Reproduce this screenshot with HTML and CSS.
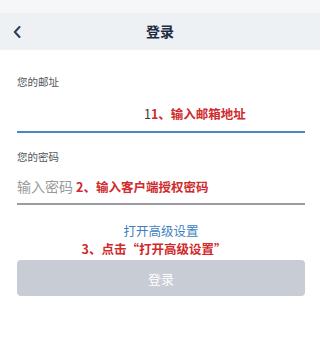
FILE: index.html
```html
<!DOCTYPE html>
<html lang="zh">
<head>
<meta charset="utf-8">
<link rel="stylesheet" href="styles.css">
</head>
<body>
<div class="top">
  <div class="status"></div>
  <div class="nav">
    <svg class="back" width="8" height="12" viewBox="0 0 8 12"><polyline points="6.5,1 1.8,6 6.5,11" fill="none" stroke="#2b3d5c" stroke-width="2" stroke-linecap="round" stroke-linejoin="round"/></svg>
    <div class="title">登录</div>
  </div>
</div>
<div class="form">
  <div class="label l1">您的邮址</div>
  <div class="field f1"><span class="note"><span class="dim">1</span>1、输入邮箱地址</span></div>
  <div class="label l2">您的密码</div>
  <div class="field f2"><span class="ph">输入密码</span><span class="note n2">2、输入客户端授权密码</span></div>
  <div class="link">打开高级设置</div>
  <div class="note n3">3、点击“打开高级设置”</div>
  <div class="btn">登录</div>
</div>
</body>
</html>
```
FILE: styles.css
```css
* { box-sizing: border-box; }
html, body { margin: 0; padding: 0; background: #fff; }
body {
  width: 320px;
  height: 359px;
  overflow: hidden;
  font-family: "Noto Sans CJK SC", "Noto Sans", sans-serif;
}
.top { background: #eef1f3; box-shadow: 0 1px 1px rgba(0,0,0,0.05); }
.status { height: 13px; background: #f5f7f8; }
.nav {
  height: 36px;
  display: flex;
  align-items: center;
  justify-content: center;
  position: relative;
}
.back { position: absolute; left: 13px; top: 13px; }
.title { font-size: 14px; font-weight: 700; color: #1c2a44; line-height: 20px; }
.form { padding: 0 15px 0 17px; display: flex; flex-direction: column; }
.label { font-size: 10.5px; line-height: 16px; color: #4f555c; }
.l1 { margin-top: 25px; }
.field { display: flex; align-items: center; }
.f1 { margin-top: 11px; height: 32px; border-bottom: 2px solid #4a86c0; padding-left: 127px; padding-bottom: 4px; }
.dim { color: #3a3a3a; font-weight: 400; }
.note { color: #cf2a2c; font-size: 12.5px; font-weight: 700; line-height: 16px; }
.l2 { margin-top: 16px; }
.f2 { margin-top: 5px; height: 35px; border-bottom: 2px solid #9a9ca0; padding-bottom: 1px; }
.ph { font-size: 14px; color: #9a9a9a; line-height: 20px; margin-right: 3px; }
.n2 { margin-top: 2px; }
.link { margin-top: 18px; text-align: center; font-size: 12.5px; line-height: 16px; color: #3d7fbe; }
.n3 { margin-top: 2px; text-align: center; padding-right: 14px; }
.btn {
  margin-top: 3px;
  height: 36px;
  border-radius: 4px;
  background: #c8ccd4;
  color: #fff;
  font-size: 13px;
  display: flex;
  align-items: center;
  justify-content: center;
}
```
